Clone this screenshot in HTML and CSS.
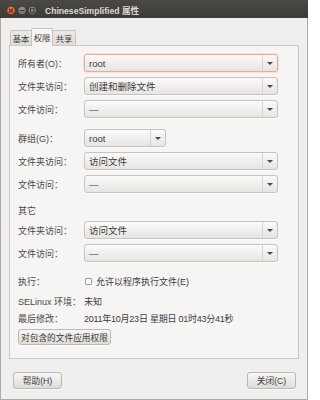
FILE: index.html
```html
<!DOCTYPE html>
<html lang="zh-CN">
<head>
<meta charset="utf-8">
<title>ChineseSimplified 属性</title>
<link rel="stylesheet" href="styles.css">
</head>
<body>
<div class="window">
  <div class="titlebar">
    <svg class="wbtns" width="40" height="18" viewBox="0 0 40 18">
      <defs>
        <radialGradient id="gc" cx="50%" cy="35%" r="60%">
          <stop offset="0" stop-color="#f7905f"/>
          <stop offset="1" stop-color="#dc4c17"/>
        </radialGradient>
        <radialGradient id="gg" cx="50%" cy="35%" r="60%">
          <stop offset="0" stop-color="#9a9993"/>
          <stop offset="1" stop-color="#6a6964"/>
        </radialGradient>
      </defs>
      <circle cx="11" cy="10.5" r="4.3" fill="url(#gc)" stroke="#2e2d2a" stroke-width="0.6"/>
      <path d="M9.3 8.8 L12.7 12.2 M12.7 8.8 L9.3 12.2" stroke="#3a2418" stroke-width="1.1" stroke-linecap="round"/>
      <circle cx="22" cy="10.5" r="4.3" fill="url(#gg)" stroke="#2e2d2a" stroke-width="0.6"/>
      <path d="M19.8 10.5 H24.2" stroke="#3a3935" stroke-width="1.2"/>
      <circle cx="32.3" cy="10.5" r="4.3" fill="url(#gg)" stroke="#2e2d2a" stroke-width="0.6"/>
      <rect x="30.5" y="8.7" width="3.6" height="3.6" fill="none" stroke="#3a3935" stroke-width="1"/>
    </svg>
    <div class="title">ChineseSimplified 属性</div>
  </div>
  <div class="content">
    <div class="tabs">
      <div class="tab">基本</div>
      <div class="tab active">权限</div>
      <div class="tab">共享</div>
    </div>
    <div class="panel">
      <div class="row">
        <div class="label">所有者(O)<span class="colon">：</span></div>
        <div class="combo focus"><span class="val">root</span><span class="btn"></span></div>
      </div>
      <div class="row gap">
        <div class="label">文件夹访问<span class="colon">：</span></div>
        <div class="combo"><span class="val">创建和删除文件</span><span class="btn"></span></div>
      </div>
      <div class="row gap">
        <div class="label">文件访问<span class="colon">：</span></div>
        <div class="combo"><span class="val">—</span><span class="btn"></span></div>
      </div>

      <div class="row sec">
        <div class="label">群组(G)<span class="colon">：</span></div>
        <div class="combo small"><span class="val">root</span><span class="btn"></span></div>
      </div>
      <div class="row gap">
        <div class="label">文件夹访问<span class="colon">：</span></div>
        <div class="combo"><span class="val">访问文件</span><span class="btn"></span></div>
      </div>
      <div class="row gap">
        <div class="label">文件访问<span class="colon">：</span></div>
        <div class="combo"><span class="val">—</span><span class="btn"></span></div>
      </div>

      <div class="heading">其它</div>
      <div class="row gap-s">
        <div class="label">文件夹访问<span class="colon">：</span></div>
        <div class="combo"><span class="val">访问文件</span><span class="btn"></span></div>
      </div>
      <div class="row gap">
        <div class="label">文件访问<span class="colon">：</span></div>
        <div class="combo"><span class="val">—</span><span class="btn"></span></div>
      </div>

      <div class="line exec">
        <div class="label">执行<span class="colon">：</span></div>
        <label class="check"><span class="box"></span><span>允许以程序执行文件(E)</span></label>
      </div>
      <div class="line selinux">
        <div class="label">SELinux 环境<span class="colon">：</span></div>
        <div class="value">未知</div>
      </div>
      <div class="line modified">
        <div class="label">最后修改<span class="colon">：</span></div>
        <div class="value date">2011年10月23日 星期日 01时43分41秒</div>
      </div>
      <div class="apply"><button class="btn-push">对包含的文件应用权限</button></div>
    </div>
    <div class="actions">
      <button class="btn-push dlg">帮助(H)</button>
      <button class="btn-push dlg">关闭(C)</button>
    </div>
  </div>
</div>
</body>
</html>
```

FILE: styles.css
```css
* { box-sizing: border-box; }
html, body { margin: 0; padding: 0; background: #ffffff; }
body {
  font-family: "Liberation Sans", "Noto Sans CJK SC", sans-serif;
  font-size: 9px;
  color: #3c3c3c;
}
.window {
  width: 308px;
  height: 400px;
  display: flex;
  flex-direction: column;
}
.titlebar {
  height: 18px;
  background: linear-gradient(#4a4945, #3c3b37);
  display: flex;
  align-items: center;
}
.wbtns { flex: none; display: block; }
.title {
  margin-left: 5px;
  margin-top: 1px;
  color: #dfdbd2;
  font-weight: bold;
  font-size: 8.6px;
  white-space: nowrap;
}
.content {
  flex: 1;
  background: #f0efee;
  border: 1px solid #aeaca7;
  border-top: none;
  padding: 0 8px;
  display: flex;
  flex-direction: column;
}
.tabs {
  display: flex;
  align-items: flex-end;
  padding-top: 9px;
  padding-left: 1px;
  height: 27px;
  position: relative;
  z-index: 1;
}
.tab {
  width: 22px;
  height: 15px;
  display: flex;
  align-items: center;
  justify-content: center;
  font-size: 8.3px;
  background: linear-gradient(#ebe9e6, #dedbd8);
  border: 1px solid #c6c3be;
  border-bottom: none;
  border-radius: 2px 2px 0 0;
  margin-right: -1px;
  color: #3c3c3c;
}
.tab.active {
  height: 18px;
  margin-bottom: -1px;
  background: #f6f5f4;
  position: relative;
  z-index: 2;
  padding-bottom: 1px;
}
.tab:nth-child(3) { width: 24px; }
.panel {
  height: 314px;
  background: #f6f5f4;
  border: 1px solid #cbc8c3;
  padding: 8px 20px 0 8px;
  display: flex;
  flex-direction: column;
}
.row {
  display: flex;
  align-items: center;
  height: 18px;
  flex: none;
}
.row.gap { margin-top: 5px; }
.row.gap-s { margin-top: 4px; }
.row.sec { margin-top: 11px; }
.label {
  width: 66px;
  flex: none;
  white-space: nowrap;
  color: #484848;
}
.colon {
  font-family: "Noto Sans CJK TC", "Noto Sans CJK JP", sans-serif;
}
.combo {
  flex: 1;
  height: 18px;
  display: flex;
  align-items: center;
  border: 1px solid #c7c4bf;
  border-radius: 3px;
  background: linear-gradient(#fbfaf9, #e7e5e2);
  box-shadow: 0 1px 0 rgba(255,255,255,0.6);
}
.combo.focus {
  border-color: #e5ab95;
  box-shadow: 0 0 0 1px rgba(240, 140, 100, 0.18);
}
.combo.small { flex: none; width: 82px; }
.combo .val {
  flex: 1;
  padding-left: 4px;
  font-size: 9.5px;
  white-space: nowrap;
  color: #3a3a3a;
}
.combo .btn {
  width: 15px;
  height: 100%;
  flex: none;
  border-left: 1px solid #d8d5d0;
  display: flex;
  align-items: center;
  justify-content: center;
}
.combo .btn::after {
  content: "";
  width: 0;
  height: 0;
  border-left: 3px solid transparent;
  border-right: 3px solid transparent;
  border-top: 3.5px solid #4a4a4a;
  margin-top: 1px;
}
.heading {
  margin-top: 12px;
  height: 12px;
  line-height: 12px;
  color: #484848;
}
.line {
  display: flex;
  align-items: center;
  height: 14px;
  flex: none;
}
.line.exec { margin-top: 12px; }
.line.selinux { margin-top: 6px; }
.line.modified { margin-top: 3px; }
.check {
  display: flex;
  align-items: center;
  color: #3c3c3c;
}
.check .box {
  width: 7px;
  height: 7px;
  border: 1px solid #9d9b97;
  border-radius: 1px;
  background: #fbfbfa;
  margin: 0 4px 0 1px;
}
.value { white-space: nowrap; }
.date { letter-spacing: -0.25px; }
.apply { margin-top: 4px; }
.btn-push {
  font-family: "Liberation Sans", "Noto Sans CJK SC", sans-serif;
  font-size: 8.7px;
  color: #3c3c3c;
  height: 16px;
  padding: 0 2px;
  border: 1px solid #bcb9b4;
  border-radius: 3px;
  background: linear-gradient(#f8f7f6, #dfdcd8);
  box-shadow: 0 1px 0 rgba(255,255,255,0.7);
  white-space: nowrap;
  display: flex;
  align-items: center;
  justify-content: center;
}
.actions {
  display: flex;
  justify-content: space-between;
  padding: 13px 3px 0 4px;
}
.btn-push.dlg {
  width: 49px;
  height: 17px;
}
```
